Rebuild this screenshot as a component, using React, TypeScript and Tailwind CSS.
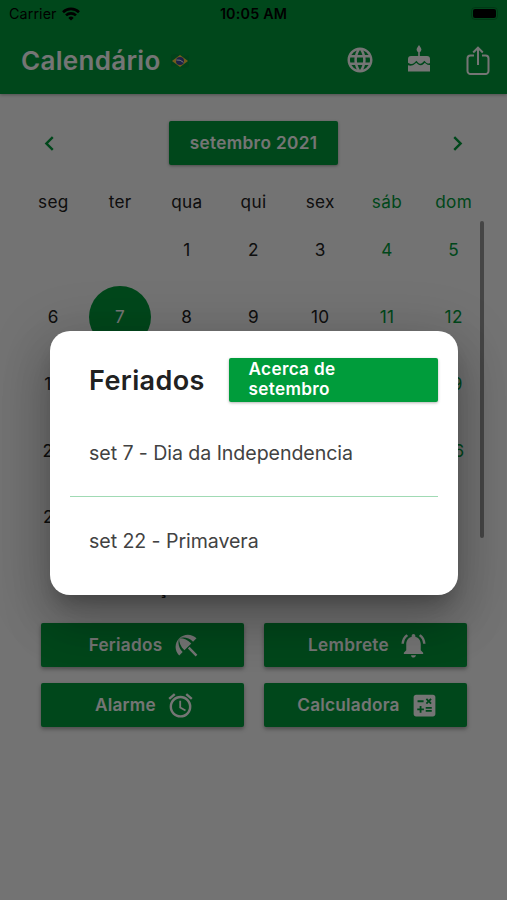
import type { ReactNode } from "react";
import { MdAlarm, MdBeachAccess, MdCalculate, MdChevronLeft, MdChevronRight, MdLanguage, MdNotificationsActive } from "react-icons/md";

const weekdays = ["seg", "ter", "qua", "qui", "sex", "sáb", "dom"];

// September 2021 starts on a Wednesday
const days: (number | null)[] = [null, null, ...Array.from({ length: 30 }, (_, i) => i + 1)];

const holidays = ["set 7 - Dia da Independencia", "set 22 - Primavera"];

const StatusBar = () => (
  <div className="flex h-[27px] items-center justify-between pl-[9px] pr-[9px] text-black">
    <div className="flex w-[160px] items-center gap-[5px]">
      <span className="text-[14.3px] tracking-[0.1px]">Carrier</span>
      <svg width="18" height="14" viewBox="0 0 18 14" fill="none" stroke="currentColor" strokeWidth="2.6">
        <path d="M1 5.2a11.4 11.4 0 0 1 16 0" />
        <path d="M4 8.4a7.2 7.2 0 0 1 10 0" />
        <path d="M9 13.6 6.3 10.9a3.9 3.9 0 0 1 5.4 0z" fill="currentColor" stroke="none" />
      </svg>
    </div>
    <span className="text-[14.3px] font-semibold tracking-[0.2px]">10:05 AM</span>
    <div className="flex w-[160px] justify-end">
      <div className="h-[13px] w-[27px] rounded-[4px] border border-black/20 p-[1px]">
        <div className="h-full w-full rounded-[2px] bg-black" />
      </div>
    </div>
  </div>
);

const Flag = () => (
  <svg width="20" height="16" viewBox="0 0 20 16">
    <path d="M1 2q5-2 9 0t9 0v12q-5 2-9 0t-9 0z" fill="#00913a" />
    <path d="M10 2 18 8l-8 6L2 8z" fill="#f8c73e" />
    <circle cx="10" cy="8" r="4" fill="#3c4a9c" />
    <path d="M6.4 7q4-.7 7 2.4" stroke="#fff" strokeWidth="1" fill="none" />
  </svg>
);

const CakeIcon = () => (
  <svg width="22" height="28" viewBox="0 0 22 28" fill="currentColor">
    <path d="M11 0c1.500 2.300 2.400 3.600 2.400 4.800A2.400 2.400 0 0 1 8.600 4.800C8.600 3.600 9.500 2.300 11 0z" />
    <path d="M10.200 6h1.600v6h-1.600z" />
    <path d="M3 11h16a3 3 0 0 1 3 3v4c-1.500 1-3 .6-4-.5l-1.600-1.700-2 1.900c-1.500 1.400-3 1.400-4.200.1L8.400 15.800l-2 1.900C5 19 3.400 19.300 2 18.800c-.8-.2-1.500-.5-2-1V14a3 3 0 0 1 3-3z" />
    <path d="M0 20.300c2.600.8 5 .3 6.700-1.200l1.600-1.400 1.400 1.300c2 1.700 3.900 1.700 5.800 0l1.300-1.300 1.200 1.100c1.200 1 2.600 1.300 4 1.100V26.500H0z" />
  </svg>
);

const ShareIcon = () => (
  <svg width="24" height="30" viewBox="0 0 24 30" fill="none" stroke="currentColor" strokeWidth="2">
    <path d="M8 9.500H4.500A3 3 0 0 0 1.500 12.500V25A3 3 0 0 0 4.500 28H19.500A3 3 0 0 0 22.500 25V12.500A3 3 0 0 0 19.500 9.500H16" />
    <path d="M12 19V2M7.200 6.500 12 1.700l4.800 4.800" />
  </svg>
);

const Header = () => (
  <header className="h-[94px] bg-[#009c3b] shadow-[0_1px_3px_rgba(0,0,0,0.3)]">
    <StatusBar />
    <div className="flex h-[67px] items-center pl-[21px] pr-[17px] text-white">
      <h1 className="text-[26px] font-semibold leading-none tracking-[0.3px]">Calendário</h1>
      <div className="ml-[9px]">
        <Flag />
      </div>
      <div className="ml-auto flex items-center">
        <MdLanguage size={30} className="-mt-[2px] mr-[33px]" />
        <div className="mb-[4px] mr-[36px]">
          <CakeIcon />
        </div>
        <ShareIcon />
      </div>
    </div>
  </header>
);

const Calendar = () => (
  <div className="flex h-[483px] flex-col pl-[20px] pr-[20px] pt-[27px]">
    <div className="flex h-[44px] items-center justify-between px-[15px] text-[#009c3b]">
      <MdChevronLeft size={29} />
      <div className="flex h-[44px] w-[169px] items-center justify-center rounded-[2px] bg-[#009c3b] text-[17.2px] font-semibold tracking-[0.35px] text-white shadow-[0_1px_3px_rgba(0,0,0,0.35)]">
        setembro 2021
      </div>
      <MdChevronRight size={29} />
    </div>
    <div className="mt-[22px] grid h-[30px] grid-cols-7 items-center text-center text-[17.2px] tracking-[0.3px]">
      {weekdays.map((day, i) => (
        <span key={day} className={i > 4 ? "text-[#009c3b]" : "text-[#212121]"}>{day}</span>
      ))}
    </div>
    <div className="grid auto-rows-[66.700px] grid-cols-7 place-items-center text-[17.2px] tracking-[0.3px]">
      {days.map((day, i) => (
        <span
          key={i}
          className={`flex size-[62px] items-center justify-center rounded-full ${
            day === 7 ? "bg-[#009c3b] text-white" : i % 7 > 4 ? "text-[#009c3b]" : "text-[#212121]"
          }`}
        >
          {day}
        </span>
      ))}
    </div>
  </div>
);

const ActionButton = ({ label, icon }: { label: string; icon: ReactNode }) => (
  <button className="flex h-[44px] items-center justify-center gap-[10px] rounded-[2px] bg-[#009c3b] pl-[5px] text-[17.2px] font-semibold tracking-[0.25px] text-white shadow-[0_2px_4px_rgba(0,0,0,0.35)]">
    {label}
    {icon}
  </button>
);

const HolidayDialog = () => (
  <div className="h-[264px] w-[408px] rounded-[20px] bg-white px-[20px] pt-[27px] shadow-[0_13px_18px_-8px_rgba(0,0,0,0.24),0_29px_46px_4px_rgba(0,0,0,0.17),0_11px_56px_10px_rgba(0,0,0,0.14)]">
    <div className="flex items-center">
      <h2 className="w-[159px] pl-[19px] pt-[2px] text-[27px] font-semibold leading-[42px] tracking-[0.4px] text-[#212121]">Feriados</h2>
      <button className="h-[44px] w-[210px] rounded-[2px] bg-[#009c3b] pb-[2px] pl-[20px] text-left text-[17.2px] font-semibold leading-[20.500px] tracking-[0.3px] text-white shadow-[0_1px_3px_rgba(0,0,0,0.3)]">
        Acerca de
        <br />
        setembro
      </button>
    </div>
    <ul className="mt-[7px] text-[19.6px] tracking-[-0.07px] text-[#424242]">
      {holidays.map((holiday) => (
        <li key={holiday} className="flex h-[88px] items-center border-b border-[#a0dab4] pl-[19px] pt-[2px] last:border-b-0">{holiday}</li>
      ))}
    </ul>
  </div>
);

export default function App() {
  return (
    <div className="relative h-[900px] w-[507px] overflow-hidden bg-[#fafafa] font-['Inter','Liberation_Sans',sans-serif]">
      <Header />
      <Calendar />
      <div className="absolute left-[480px] top-[221px] h-[317px] w-[4px] rounded-full bg-black/40" />
      <h2 className="h-[46px] pl-[106px] text-[20px] font-bold leading-none text-[#212121]">Serviços</h2>
      <div className="grid grid-cols-[203px_203px] gap-x-[20px] gap-y-[16px] pl-[41px]">
        <ActionButton label="Feriados" icon={<MdBeachAccess size={29} />} />
        <ActionButton label="Lembrete" icon={<MdNotificationsActive size={29} />} />
        <ActionButton label="Alarme" icon={<MdAlarm size={29} />} />
        <ActionButton label="Calculadora" icon={<MdCalculate size={29} />} />
      </div>
      <div className="absolute inset-0 bg-black/54 pl-[50px] pt-[331px]">
        <HolidayDialog />
      </div>
    </div>
  );
}
